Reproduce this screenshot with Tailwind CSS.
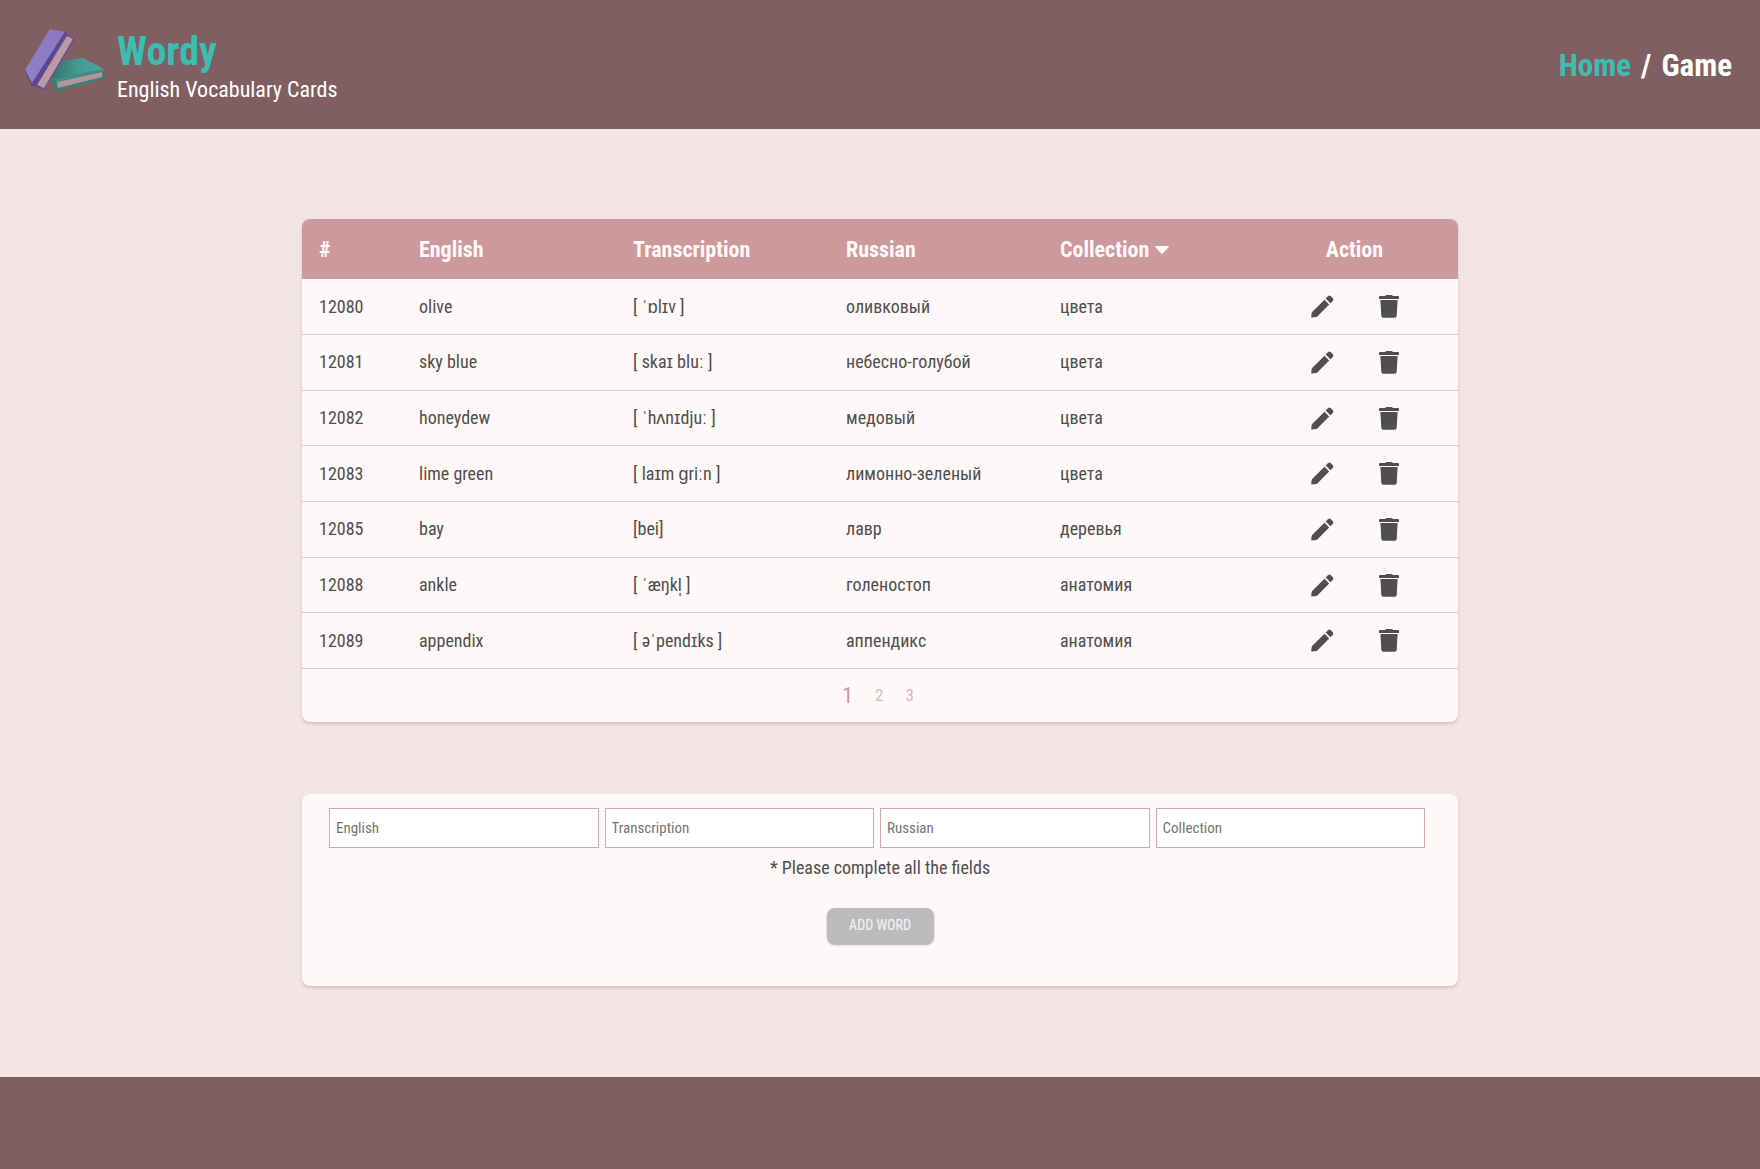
<!DOCTYPE html>
<html lang="en">
<head>
<meta charset="utf-8">
<meta name="viewport" content="width=device-width, initial-scale=1">
<title>Wordy</title>
<script src="https://cdn.jsdelivr.net/npm/@tailwindcss/browser@4"></script>
</head>
<body class="min-h-screen flex flex-col bg-[#f3e5e5] text-[#4f4f4f] font-['Roboto_Condensed',Roboto,sans-serif]">
<header class="h-[129px] shrink-0 bg-[#805f62] flex items-center justify-between pl-6 pr-7">
  <a href="#" class="flex items-start gap-3">
    <svg class="mt-1 w-[81px] h-[64px]" viewBox="0 0 81 64" aria-hidden="true">
      <defs>
        <linearGradient id="p" x1="0" y1="1" x2="1" y2="0"><stop offset="0" stop-color="#8f80c8"/><stop offset="1" stop-color="#8878c2"/></linearGradient>
        <linearGradient id="t" x1="0" y1="0" x2="1" y2="0"><stop offset="0" stop-color="#39706d"/><stop offset=".5" stop-color="#449a91"/><stop offset="1" stop-color="#4aa89d"/></linearGradient>
      </defs>
      <path d="M29 50 80 41V51L33 63 27 52Z" fill="#34827c"/>
      <path d="M33 54 78 44V49L34 60Z" fill="#b39498"/>
      <path d="M38 33 59 30 80 41 31 51 28 47Z" fill="url(#t)"/>
      <path d="M31 51 80 41V43L32 54Z" fill="#3d8f87"/>
      <path d="M40 4 51 11 20 62 10 58Z" fill="#654d97"/>
      <path d="M43 8 49 11 20 60 13 57Z" fill="#bc9aa5"/>
      <path d="M26 1 41 4 8 56 1 42Z" fill="url(#p)"/>
      <path d="M41 4 42 6 12 58 8 58 1 44V42L8 55Z" fill="#5c468f"/>
    </svg>
    <span class="flex flex-col pt-[6px]">
      <span class="text-[40px] leading-[44px] font-bold text-[#3dbdb0]">Wordy</span>
      <span class="text-[22px] leading-8 text-white">English Vocabulary Cards</span>
    </span>
  </a>
  <nav class="flex gap-[10px] pt-[2px] text-[31px] leading-9 font-bold text-white">
    <a href="#" class="text-[#3dbdb0]">Home</a><span>/</span><a href="#">Game</a>
  </nav>
</header>
<main class="grow w-full max-w-[1156px] mx-auto pt-[90px] pb-[91px] flex flex-col gap-[72px]">
  <section class="rounded-lg overflow-hidden bg-[#fff8f8] shadow-[0_2px_3px_#dcbcbf]">
    <table class="h-[450px] w-full table-fixed text-left text-lg">
      <colgroup><col class="w-[100px]"><col class="w-[214px]"><col class="w-[213px]"><col class="w-[214px]"><col class="w-[208px]"><col></colgroup>
      <thead class="bg-[#cc999d] text-[#fff8f8] text-[22px]">
        <tr class="h-[60px]"><th class="px-[17px] pt-[2px]">#</th><th class="px-[17px] pt-[2px]">English</th><th class="px-[17px] pt-[2px]">Transcription</th><th class="px-[17px] pt-[2px]">Russian</th>
        <th class="px-[17px] pt-[2px]"><button class="flex items-center gap-[6px]">Collection <svg class="w-[14px] h-2" viewBox="0 0 14 8" fill="currentColor" aria-hidden="true"><path d="M1.3 0H12.7Q14.3.3 13.4 1.5L8 7.3Q7 8.2 6 7.3L.6 1.5Q-.3.3 1.3 0Z"/></svg></button></th>
        <th class="px-[17px] pt-[2px] text-center">Action</th></tr>
      </thead>
      <tbody id="words"></tbody>
    </table>
    <nav class="h-[53px] flex justify-center items-center gap-[22px] pr-1 text-[17px] text-[#dfb5ba]" aria-label="Pages">
      <button class="text-[22px] text-[#cc999d]">1</button><button>2</button><button>3</button>
    </nav>
  </section>
  <form class="h-[192px] rounded-lg bg-[#fff8f8] shadow-[0_2px_3px_#dcbcbf] pt-[14px] flex flex-col items-center">
    <div class="w-full pl-[27px] pr-[33px] grid grid-cols-4 gap-[6px]">
      <input type="text" aria-label="English" placeholder="English" class="min-w-0 h-10 border border-[#cfa9ac] bg-white px-[6px] text-[15px] placeholder:text-[#757575]">
      <input type="text" aria-label="Transcription" placeholder="Transcription" class="min-w-0 h-10 border border-[#cfa9ac] bg-white px-[6px] text-[15px] placeholder:text-[#757575]">
      <input type="text" aria-label="Russian" placeholder="Russian" class="min-w-0 h-10 border border-[#cfa9ac] bg-white px-[6px] text-[15px] placeholder:text-[#757575]">
      <input type="text" aria-label="Collection" placeholder="Collection" class="min-w-0 h-10 border border-[#cfa9ac] bg-white px-[6px] text-[15px] placeholder:text-[#757575]">
    </div>
    <p class="mt-2 text-lg leading-6">* Please complete all the fields</p>
    <button type="button" disabled class="mt-7 h-9 w-[107px] pb-[2px] rounded-lg bg-[#bcbcbc] shadow-[0_1px_2px_#aaaaaa] text-sm text-[#f5f5f5] uppercase">Add word</button>
  </form>
</main>
<footer class="h-[92px] shrink-0 bg-[#805f62]"></footer>
<template id="row">
  <tr class="h-[55px] border-b border-[#e3c8cb]">
    <td class="px-[17px]"></td><td class="px-[17px]"></td><td class="px-[17px]"></td><td class="px-[17px]"></td><td class="px-[17px]"></td>
    <td><div class="flex justify-center gap-[45px]">
      <button aria-label="Edit"><svg class="w-[23px] h-[23px]" viewBox="0 0 23 23" fill="currentColor"><path d="M13.500 4.800 18.200 9.500 6.300 21.400Q5.600 22 4.800 22.100L1.200 22.600Q.1 22.700.2 21.600L.7 18Q.8 17.200 1.400 16.700Z"/><path d="M14.700 3.600 17 1.300Q18.400 0 19.800 1.200L21.800 3.200Q23 4.600 21.700 6L19.400 8.300Z"/></svg></button>
      <button aria-label="Delete"><svg class="w-[20px] h-[23px]" viewBox="0 0 20 23" fill="currentColor"><path d="M6 1 6.500.4Q7 0 7.700 0H12.300Q13 0 13.500.4L14 1H19Q20 1 20 2V4H0V2Q0 1 1 1Z"/><path d="M1.400 5H18.600L17.700 20.800Q17.500 22.800 15.600 22.800H4.400Q2.500 22.800 2.300 20.800Z"/></svg></button>
    </div></td>
  </tr>
</template>
<script>
const words = [
  ["12080","olive","[ ˈɒlɪv ]","оливковый","цвета"],
  ["12081","sky blue","[ skaɪ bluː ]","небесно-голубой","цвета"],
  ["12082","honeydew","[ ˈhʌnɪdjuː ]","медовый","цвета"],
  ["12083","lime green","[ laɪm ɡriːn ]","лимонно-зеленый","цвета"],
  ["12085","bay","[bei]","лавр","деревья"],
  ["12088","ankle","[ ˈæŋkl̩ ]","голеностоп","анатомия"],
  ["12089","appendix","[ əˈpendɪks ]","аппендикс","анатомия"]
];
const body = document.getElementById("words"), row = document.getElementById("row");
for (const w of words) {
  const r = row.content.cloneNode(true), cells = r.querySelectorAll("td");
  w.forEach((t, i) => cells[i].textContent = t);
  body.append(r);
}
</script>
</body>
</html>
